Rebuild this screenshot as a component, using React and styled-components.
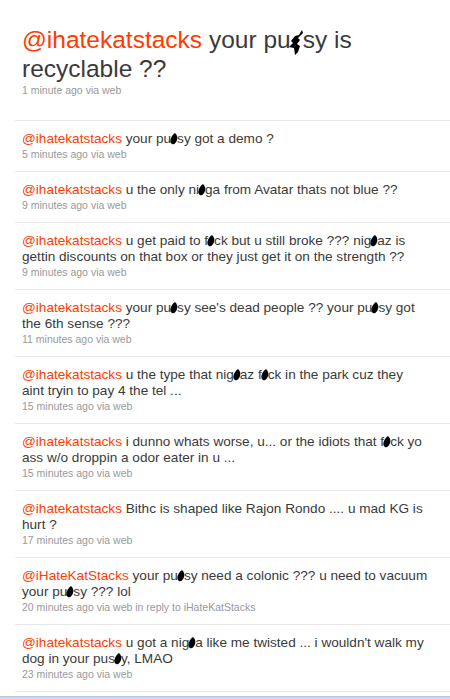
import React from "react";
import styled, { createGlobalStyle } from "styled-components";

const GlobalStyle = createGlobalStyle`
  html, body {
    margin: 0;
    padding: 0;
    background: #fff;
  }
  body {
    font-family: "Liberation Sans", Arial, sans-serif;
    color: #333;
  }
`;

const Page = styled.div`
  width: 450px;
  height: 699px;
  overflow: hidden;
  display: flex;
  flex-direction: column;
`;

const Content = styled.div`
  flex: 1;
  padding-left: 15px;
`;

const Status = styled.div`
  padding: 27px 12px 0 7px;
`;

const Heading = styled.h1`
  margin: 0;
  font-size: 24.5px;
  line-height: 26px;
  font-weight: normal;
  color: #3a3a3a;
`;

const Mention = styled.span`
  color: #ff3c00;
`;

const Meta = styled.div`
  font-size: 10.5px;
  line-height: ${(p) => (p.$big ? "14px" : "15px")};
  margin-top: ${(p) => (p.$big ? "1px" : "0")};
  color: #999;
`;

const List = styled.ul`
  list-style: none;
  margin: 23px 0 0;
  padding: 0;
`;

const Item = styled.li`
  border-top: 1px solid #e8e8e8;
  padding: 10px 22px 9px 7px;
  &:last-child {
    border-bottom: 1px solid #e8e8e8;
  }
`;

const Text = styled.div`
  font-size: 13.6px;
  line-height: 16px;
  color: #3a3a3a;
`;

const Blot = styled.svg`
  display: inline-block;
  width: ${(p) => p.$w}px;
  height: ${(p) => p.$h}px;
  vertical-align: ${(p) => p.$va}px;
  margin: 0 ${(p) => p.$mx}px;
`;

const Footer = styled.div`
  height: 2px;
  border-top: 1px solid #b9c8d8;
  background: #c9dcef;
`;

function Ink({ big }) {
  if (big) {
    return (
      <Blot $w={18} $h={26} $va={-8} $mx={-3} viewBox="0 0 18 26">
        <path
          d="M14 0 L11 5 L7 6 L3 11 L5 13 L1 17 L6 18 L7 25 L10 22 L12 16 L9 14 L12 10 L10 8 L15 3 Z"
          fill="#000"
        />
      </Blot>
    );
  }
  return (
    <Blot $w={8} $h={12} $va={-2} $mx={-1} viewBox="0 0 8 12">
      <path
        d="M5 0 C7 2 8 4 7 7 C6 10 4 12 2 11 C0 10 0 7 1 5 C2 3 3 1 5 0 Z"
        fill="#000"
      />
    </Blot>
  );
}

function Body({ text, big }) {
  const parts = text.split("#");
  return parts.map((p, i) => (
    <React.Fragment key={i}>
      {p}
      {i < parts.length - 1 && <Ink big={big} />}
    </React.Fragment>
  ));
}

const tweets = [
  { at: "ihatekatstacks", text: " your pu#sy got a demo ?", meta: "5 minutes ago via web" },
  { at: "ihatekatstacks", text: " u the only ni#ga from Avatar thats not blue ??", meta: "9 minutes ago via web" },
  {
    at: "ihatekatstacks",
    text: " u get paid to f#ck but u still broke ??? nig#az is gettin discounts on that box or they just get it on the strength ??",
    meta: "9 minutes ago via web",
  },
  {
    at: "ihatekatstacks",
    text: " your pu#sy see's dead people ?? your pu#sy got the 6th sense ???",
    meta: "11 minutes ago via web",
  },
  {
    at: "ihatekatstacks",
    text: " u the type that nig#az f#ck in the park cuz they aint tryin to pay 4 the tel ...",
    meta: "15 minutes ago via web",
  },
  {
    at: "ihatekatstacks",
    text: " i dunno whats worse, u... or the idiots that f#ck yo ass w/o droppin a odor eater in u ...",
    meta: "15 minutes ago via web",
  },
  {
    at: "ihatekatstacks",
    text: " Bithc is shaped like Rajon Rondo .... u mad KG is hurt ?",
    meta: "17 minutes ago via web",
  },
  {
    at: "iHateKatStacks",
    text: " your pu#sy need a colonic ??? u need to vacuum your pu#sy ??? lol",
    meta: "20 minutes ago via web in reply to iHateKatStacks",
  },
  {
    at: "ihatekatstacks",
    text: " u got a nig#a like me twisted ... i wouldn't walk my dog in your pus#y, LMAO",
    meta: "23 minutes ago via web",
  },
];

export default function App() {
  return (
    <Page>
      <GlobalStyle />
      <Content>
        <Status>
          <Heading>
            <Mention>@ihatekatstacks</Mention>
            <Body big text=" your pu#sy is recyclable ??" />
          </Heading>
          <Meta $big>1 minute ago via web</Meta>
        </Status>
        <List>
          {tweets.map((t, i) => (
            <Item key={i}>
              <Text>
                <Mention>@{t.at}</Mention>
                <Body text={t.text} />
              </Text>
              <Meta>{t.meta}</Meta>
            </Item>
          ))}
        </List>
      </Content>
      <Footer />
    </Page>
  );
}
